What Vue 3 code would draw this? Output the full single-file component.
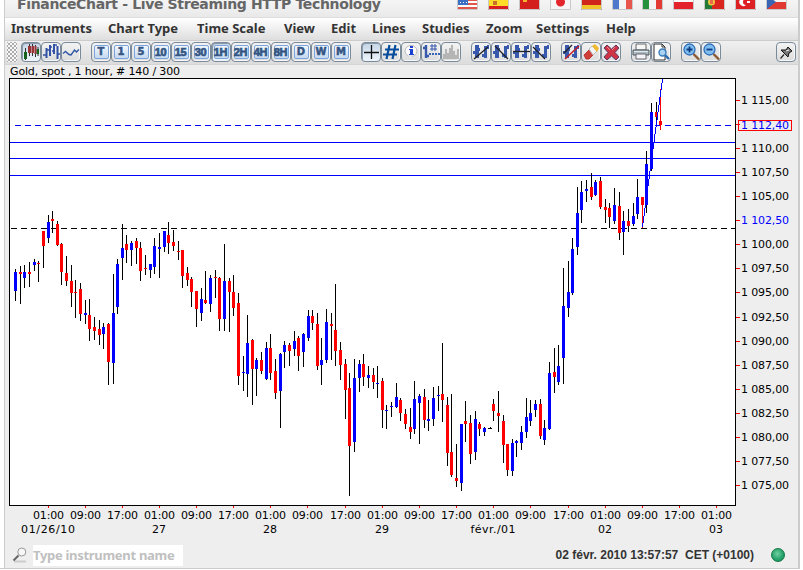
<template>
	<div class="window">
		<header class="title-bar">
			<h1 class="title">FinanceChart - Live Streaming HTTP Technology</h1>
			<div class="flags">
				<svg v-for="flag in flags" :key="flag.name" class="flag" viewBox="0 0 21 16">
					<path v-for="(s, i) in flag.shapes" :key="i" :d="s[0]" :fill="s[1]" />
					<path d="M.5 .5H20.5V15.5H.5Z" fill="none" stroke="#c9c9c9" />
				</svg>
			</div>
		</header>

		<nav class="menu">
			<span v-for="item in menu" :key="item[0]" class="menu-item" :style="{ width: item[1] + 'px' }">{{ item[0] }}</span>
		</nav>

		<div class="toolbar">
			<div class="handle"></div>
			<div v-for="(group, g) in groups" :key="g" class="group" :class="{ 'group-last': g === groups.length - 1 }">
				<button v-for="name in group" :key="name" class="tool" :class="{ active: active.includes(name) }">
					<svg v-if="icons[name]" class="icon" viewBox="0 0 20 20">
						<path
							v-for="(s, i) in icons[name]"
							:key="i"
							:d="s[0]"
							:fill="s[1] || 'none'"
							:stroke="s[2] || 'none'"
							:stroke-width="s[3] || 1"
						/>
					</svg>
					<span v-else class="period" :class="{ narrow: name.length > 1 }">{{ name }}</span>
				</button>
			</div>
		</div>

		<svg class="chart" viewBox="5 65 793 476">
			<text x="10" y="75" textLength="170" class="label">Gold, spot , 1 hour, # 140 / 300</text>
			<rect x="9.5" y="78.5" width="726" height="427" fill="#fff" stroke="#000" />

			<g shape-rendering="crispEdges">
				<path d="M10 142.5H735M10 158.5H735M10 175.5H735" stroke="#00f" />
				<path d="M15 125.5H735" stroke="#00f" stroke-dasharray="6 4" />
				<path d="M11 228.5H735" stroke="#000" stroke-dasharray="6 4" />

				<g v-for="c in candles" :key="c[0]">
					<rect :x="c[0]" :y="c[1]" width="1" :height="c[2] - c[1]" :fill="c[6] || '#000'" />
					<rect :x="c[0] - 1" :y="c[3]" width="3" :height="c[4] - c[3]" :fill="c[5] ? '#00f' : '#f00'" />
				</g>
				<path d="M490 427V429M488 428.5H492" stroke="#000" />
				<path d="M642.5 227L662.5 79" stroke="#00f" fill="none" />

				<path v-for="p in prices" :key="p[0]" :d="`M736 ${p[1]}.5H740`" stroke="#f00" />
				<path v-for="x in ticks" :key="x" :d="`M${x}.5 506V508`" stroke="#f00" />
				<rect x="738.5" y="120.5" width="53" height="10" fill="none" stroke="#f00" />
			</g>

			<text
				v-for="p in prices"
				:key="p[0]"
				x="741"
				:y="p[1] + (p[2] ? 5 : 4)"
				textLength="48"
				class="label"
				:class="{ blue: p[3] }"
			>{{ p[0] }}</text>
			<text v-for="(x, i) in ticks" :key="x" :x="x - 15" y="519" textLength="31" class="label">{{ hours[i % 3] }}</text>
			<text
				v-for="d in days"
				:key="d[0]"
				:x="d[1]"
				y="533"
				text-anchor="middle"
				:textLength="d[2]"
				class="label"
			>{{ d[0] }}</text>
		</svg>

		<footer class="status">
			<svg class="search" viewBox="0 0 16 16">
				<path d="M2 14.5H14" stroke="#ccc" stroke-width="2" />
				<path d="M1.5 13.5L6.5 8.5" stroke="#666" stroke-width="2" />
				<circle cx="9.8" cy="5" r="4" fill="#f7f7f7" stroke="#999" />
			</svg>
			<input class="instrument" placeholder="Type instrument name" />
			<span class="clock">02 févr. 2010 13:57:57&nbsp; CET (+0100)</span>
			<span class="led"></span>
		</footer>
	</div>
</template>

<script setup>
const box = 'M0 0H21V16H0Z';

const flags = [
	{
		name: 'us',
		shapes: [[box, '#fff'], ['M1 1H20V3H1ZM1 5H20V7H1ZM1 9H20V11H1ZM1 13H20V15H1Z', '#e0564a'], ['M1 1H11V11H1Z', '#3b6fc4'], ['M3 8H4V9H3ZM6 8H7V9H6ZM9 8H10V9H9Z', '#fff']],
	},
	{ name: 'es', shapes: [[box, '#d81e1e'], ['M1 5H20V12H1Z', '#ffdc28'], ['M5 7H9V11H5Z', '#c8702a']] },
	{ name: 'cn', shapes: [[box, '#d3201c'], ['M4 5H8V8H4Z', '#f7b52c']] },
	{ name: 'jp', shapes: [[box, '#f6f6f6'], ['M6 8A4.5 4.5 0 1 0 15 8A4.5 4.5 0 1 0 6 8Z', '#e3262b']] },
	{ name: 'de', shapes: [[box, '#333'], ['M1 6H20V11H1Z', '#d0251b'], ['M1 11H20V15H1Z', '#f2c42c']] },
	{ name: 'fr', shapes: [[box, '#f4f4f4'], ['M1 1H7V15H1Z', '#4d78cb'], ['M14 1H20V15H14Z', '#e8554d']] },
	{ name: 'it', shapes: [[box, '#f4f4f4'], ['M1 1H7V15H1Z', '#25913c'], ['M14 1H20V15H14Z', '#e33a34']] },
	{ name: 'pl', shapes: [[box, '#f7f7f7'], ['M1 8H20V15H1Z', '#e3222b']] },
	{ name: 'pt', shapes: [[box, '#d9251e'], ['M1 1H8V15H1Z', '#237a37'], ['M4 8A3.5 3.5 0 1 0 11 8A3.5 3.5 0 1 0 4 8Z', '#f0c43c'], ['M6 6H9V10H6Z', '#e66a4b']] },
	{ name: 'tr', shapes: [[box, '#dc2024'], ['M11 5A4 4 0 1 0 11 11A3 3 0 1 1 11 5ZM12 7H15V9H12Z', '#fff']] },
	{ name: 'cz', shapes: [[box, '#f4f4f4'], ['M1 8H20V15H1Z', '#e13a32'], ['M1 1L10 8L1 15Z', '#3a65b5']] },
];

// caption and slot width
const menu = [
	['Instruments', 97],
	['Chart Type', 89],
	['Time Scale', 87],
	['View', 47],
	['Edit', 41],
	['Lines', 50],
	['Studies', 64],
	['Zoom', 50],
	['Settings', 70],
	['Help', 40],
];

const groups = [
	['candles', 'bars', 'line'],
	['T', '1', '5', '10', '15', '30', '1H', '2H', '4H', '8H', 'D', 'W', 'M'],
	['cross', 'grid', 'info', 'levels', 'volume'],
	['trend', 'ray', 'horizontal', 'parallel'],
	['erase-line', 'eraser', 'delete'],
	['print', 'preview'],
	['zoom-in', 'zoom-out'],
	['pin'],
];

const active = ['candles', '1H', 'cross'];

const barShape = 'M4 3H8V16H4ZM2 9H4V12H2ZM8 6H9V9H8ZM13 4H16V16H13ZM11 12H13V15H11ZM16 3H18V7H16Z';
const lens = 'M3 7.5A5.5 5.5 0 1 0 14 7.5A5.5 5.5 0 1 0 3 7.5Z';

// each entry: path, fill, stroke, stroke width
const icons = {
	candles: [
		['M4.5 6V18M8.5 2V14M11.5 2V14M14.5 3V15M17 5V14', '', '#333'],
		['M3 10H6V17H3ZM15.5 7H18V12H15.5Z', '#16611c'],
		['M7 4H10V11H7ZM10.5 4H13V11H10.5ZM13.5 4H15.5V12H13.5Z', '#993336'],
	],
	bars: [
		['M5.5 6V16M9 3V14M13 2V12M16.5 4V17', '', '#3152a5', 2],
		['M2 13H5M5 8H9M9 5H11M11 9H13M13 3H16M16 12H19', '', '#3152a5', 1.6],
	],
	line: [['M2 11.5L4.5 9.5L8 12.5L10 13L13.5 8L15.5 10L18 7.5', '', '#3058a5', 1.4]],
	cross: [['M10.5 3V17M3 10.5H18', '', '#111', 1.3]],
	grid: [['M8.5 3L5.5 17M14.5 3L11.5 17M4 7.5H18M2 12.5H16', '', '#064e9d', 2.2]],
	info: [
		['M4 9A6 5.5 0 1 0 16 9A6 5.5 0 1 0 4 9Z', '#fafafa', '#bbb'],
		['M7 13L9 17L12 13Z', '#e8e8e8'],
		['M9 4H12V6H9ZM8 7H12V12H13V13H8V12H9V8H8Z', '#1b3fd2'],
	],
	levels: [
		['M5 3V16M2 6H5M5 14H8', '', '#3859ab', 2.4],
		['M9 4H16M9 7H16M11 2V9M14 2V9', '', '#3859ab'],
		['M8 11H10V13H8ZM11 11H13V13H11ZM14 11H16V13H14ZM17 11H19V13H17Z', '#3b66b8'],
	],
	volume: [['M2 17V12H4V7H6V11H8V6H10V3H12V9H14V13H16V7H18V17Z', '#b5b5b5']],
	trend: [[barShape, '#3758ad'], ['M3 17L17 5', '', '#222', 1.3]],
	ray: [[barShape, '#3758ad'], ['M4 4L17 17', '', '#222', 1.3]],
	horizontal: [[barShape, '#3758ad'], ['M2 9.5H19', '', '#222', 1.3]],
	parallel: [[barShape, '#3758ad'], ['M2 5L14 17', '', '#222', 1.3]],
	'erase-line': [[barShape, '#3758ad'], ['M3 11L11 3', '', '#222', 1.2], ['M4 17L18 4', '', '#c3202b', 1.6]],
	eraser: [
		['M3 13L8 8L13 12L8 17H5Z', '#cf3e38', '#b33'],
		['M8 7L11 4L16 9L12 13Z', '#f4f4f4', '#bbb'],
		['M11 4L14 2L18 6L16 10Z', '#f2ba32'],
	],
	delete: [
		['M3 6L6 3L10.5 7L15 3L18 6L14 10.5L18 15L15 18L10.5 14L6 18L3 15L7 10.5Z', '#cf3445', '#5a3968'],
		['M6 5L9 8M14 5L11 8', '', '#ec8a8d', 1],
	],
	print: [
		['M5 2H15V8H5Z', '#f7f7f7', '#666'],
		['M2 8H18V13H2Z', '#aebcc2', '#4d5960'],
		['M3 9H17V10H3Z', '#dfe9ed'],
		['M5 12H15V17H5Z', '#f3f5f6', '#667'],
	],
	preview: [
		['M3 2H11L14 5V18H3Z', '#fff', '#333'],
		['M11 2V5H14', '', '#333'],
		['M13 12L18 17', '', '#2f6bb0', 2.4],
		['M8 10.5A3.5 3.5 0 1 0 15 10.5A3.5 3.5 0 1 0 8 10.5Z', '#a9d2f3', '#3c7dbd', 1.4],
	],
	'zoom-in': [
		['M12.5 12L18 17.5', '', '#8b5a32', 2.4],
		[lens, '#82bdf0', '#2e6fb8', 1.3],
		['M5.5 7.5H11.5M8.5 4.5V10.5', '', '#0c3c82', 1.8],
	],
	'zoom-out': [
		['M12.5 12L18 17.5', '', '#8b5a32', 2.4],
		[lens, '#82bdf0', '#2e6fb8', 1.3],
		['M5.5 7.5H11.5', '', '#0c3c82', 1.8],
	],
	pin: [
		['M4.5 16.5L8 12.5', '', '#222', 1.2],
		['M5 8L10 8L12 5L16 9L13 11L12 15L9 12Z', '#777', '#111'],
		['M10 9L13 8', '', '#eee'],
	],
};

// caption, tick y, boxed, blue
const prices = [
	['1 115,00', 100],
	['1 112,40', 124, true, true],
	['1 110,00', 148],
	['1 107,50', 172],
	['1 105,00', 196],
	['1 102,50', 220, false, true],
	['1 100,00', 244],
	['1 097,50', 268],
	['1 095,00', 292],
	['1 092,50', 317],
	['1 090,00', 341],
	['1 087,50', 365],
	['1 085,00', 389],
	['1 082,50', 413],
	['1 080,00', 437],
	['1 077,50', 461],
	['1 075,00', 485],
];

const hours = ['01:00', '09:00', '17:00'];
const ticks = [48, 85, 122, 159, 196, 233, 270, 307, 345, 382, 419, 456, 493, 530, 568, 605, 642, 679, 716];

// caption, centre, length
const days = [['01/26/10', 48, 54], ['27', 159, 14], ['28', 270, 14], ['29', 382, 14], ['févr./01', 493, 45], ['02', 605, 14], ['03', 716, 14]];

// x, high, low, body top, body bottom, rising, wick colour
const candles = [
	[15, 269, 301, 272, 291, 1], [20, 266, 304, 272, 274, 0], [24, 265, 288, 272, 278, 1], [29, 262, 287, 272, 274, 0],
	[34, 259, 271, 262, 265, 1], [38, 261, 282, 263, 264, 0], [43, 231, 268, 231, 246, 0], [48, 215, 243, 222, 238, 1],
	[52, 211, 233, 219, 221, 0], [57, 221, 246, 224, 245, 0], [61, 243, 285, 244, 272, 0], [66, 256, 286, 273, 281, 0],
	[71, 265, 307, 281, 293, 0], [75, 280, 318, 292, 293, 0], [80, 283, 321, 289, 314, 0], [85, 300, 324, 313, 315, 1],
	[89, 299, 341, 315, 329, 0], [94, 317, 340, 327, 331, 0], [99, 320, 345, 329, 335, 0], [103, 323, 349, 327, 334, 1],
	[108, 323, 385, 324, 362, 0], [113, 274, 384, 313, 363, 1], [117, 259, 314, 264, 307, 1], [122, 224, 280, 248, 258, 1],
	[126, 235, 263, 244, 250, 0], [131, 241, 266, 243, 250, 1], [136, 238, 264, 241, 248, 0], [140, 242, 281, 248, 271, 0],
	[145, 255, 275, 268, 269, 0], [150, 264, 278, 264, 270, 1], [154, 238, 274, 246, 267, 1], [159, 233, 278, 247, 249, 1],
	[164, 231, 252, 231, 247, 1], [168, 222, 254, 235, 243, 0], [173, 230, 251, 242, 246, 0], [178, 241, 260, 251, 252, 0],
	[182, 250, 288, 250, 276, 0], [187, 267, 286, 273, 280, 0], [191, 277, 307, 279, 292, 0], [196, 291, 327, 291, 309, 0],
	[201, 288, 321, 299, 313, 1], [205, 271, 304, 300, 303, 0], [210, 275, 312, 278, 304, 1], [215, 270, 298, 277, 278, 0],
	[219, 277, 331, 278, 319, 0], [224, 244, 331, 281, 319, 1], [229, 278, 332, 281, 292, 0], [233, 275, 316, 292, 308, 0],
	[238, 293, 385, 303, 376, 0], [243, 356, 391, 372, 373, 1], [247, 315, 397, 343, 374, 1], [252, 339, 405, 340, 369, 0],
	[256, 358, 396, 360, 369, 1], [261, 352, 374, 360, 371, 0], [266, 342, 380, 348, 379, 1], [270, 334, 380, 348, 373, 0],
	[275, 359, 399, 371, 393, 0], [280, 353, 428, 354, 391, 1], [284, 341, 368, 345, 352, 1], [289, 343, 366, 345, 351, 0],
	[294, 331, 356, 341, 349, 1], [298, 336, 371, 338, 356, 0], [303, 333, 367, 334, 352, 1], [308, 310, 341, 316, 338, 1],
	[312, 310, 330, 316, 323, 0], [317, 313, 370, 324, 366, 0], [321, 338, 385, 360, 365, 1], [326, 309, 363, 322, 360, 1],
	[331, 313, 360, 324, 326, 0], [335, 284, 366, 330, 351, 0], [340, 342, 380, 350, 365, 0], [345, 359, 419, 364, 390, 0],
	[349, 373, 496, 388, 446, 0], [354, 359, 452, 378, 442, 1], [359, 360, 392, 364, 378, 1], [363, 354, 386, 364, 377, 0],
	[368, 366, 388, 375, 378, 1], [373, 368, 389, 375, 382, 0], [377, 366, 398, 383, 384, 1], [382, 378, 428, 381, 410, 0],
	[386, 405, 429, 410, 411, 1], [391, 402, 417, 406, 407, 1], [396, 383, 408, 397, 407, 1], [400, 398, 421, 400, 413, 0],
	[405, 409, 429, 414, 424, 0], [410, 408, 439, 427, 432, 0], [414, 381, 434, 399, 429, 1], [419, 394, 444, 396, 403, 1],
	[424, 389, 428, 397, 420, 0], [428, 400, 431, 419, 421, 1], [433, 387, 426, 398, 419, 1], [438, 386, 411, 395, 396, 1],
	[442, 343, 422, 394, 400, 0], [447, 397, 466, 405, 453, 0], [451, 394, 477, 452, 475, 0], [456, 444, 487, 478, 481, 0],
	[461, 424, 491, 424, 483, 1], [465, 401, 442, 421, 424, 0], [470, 415, 464, 423, 454, 0], [475, 411, 460, 419, 452, 1],
	[479, 422, 436, 424, 429, 0], [484, 427, 436, 428, 432, 1], [493, 399, 421, 404, 411, 0], [498, 391, 432, 413, 416, 0],
	[503, 415, 463, 421, 445, 0], [507, 444, 476, 444, 470, 0], [512, 439, 476, 443, 471, 1], [516, 440, 457, 441, 443, 1],
	[521, 426, 450, 432, 443, 1], [526, 398, 438, 417, 432, 1], [530, 400, 426, 413, 421, 1], [535, 400, 417, 404, 410, 1],
	[540, 399, 439, 404, 436, 0], [544, 420, 445, 428, 440, 1], [549, 362, 430, 373, 429, 1], [554, 348, 393, 372, 377, 0],
	[558, 345, 385, 366, 382, 1], [563, 268, 384, 306, 358, 1], [568, 261, 317, 292, 308, 1], [572, 238, 295, 249, 293, 1],
	[577, 187, 255, 213, 247, 1], [581, 181, 223, 192, 210, 1], [586, 180, 202, 189, 191, 1], [591, 173, 200, 187, 197, 0],
	[595, 180, 196, 182, 195, 1], [600, 177, 209, 181, 207, 0], [605, 199, 223, 207, 210, 0], [609, 203, 228, 208, 217, 0],
	[614, 188, 224, 205, 221, 1], [619, 192, 240, 206, 233, 0], [623, 211, 255, 221, 232, 1], [628, 209, 232, 221, 226, 0],
	[633, 203, 226, 216, 224, 1], [637, 179, 219, 197, 214, 1], [642, 197, 228, 197, 205, 0, '#f00'], [646, 151, 213, 164, 205, 1],
	[651, 103, 171, 112, 169, 1], [656, 102, 120, 112, 117, 0], [660, 89, 130, 121, 125, 0, '#f00'],
];
</script>

<style>
body {
	margin: 0;
	background: #fff;
}
</style>

<style scoped>
.window {
	box-sizing: border-box;
	width: 800px;
	height: 569px;
	padding-left: 4px;
	border-right: 2px solid #ccc;
	border-bottom: 1px solid #ccc;
	display: flex;
	flex-direction: column;
	background: linear-gradient(90deg, #fff 4px, #ccc 4px, #ccc 5px, #eee 5px);
}

.window > * {
	box-sizing: border-box;
	margin-left: 1px;
	flex: none;
}

.title-bar {
	display: flex;
	justify-content: space-between;
	height: 17px;
	padding: 0 11px 0 12px;
	background: linear-gradient(#f5f5f5, #e9e9e9);
}

.title {
	margin: -6px 0 0;
	font: bold 14px/20px "DejaVu Sans", sans-serif;
	letter-spacing: -0.35px;
	white-space: nowrap;
	color: #666;
}

.flags {
	display: flex;
	gap: 9.9px;
	margin-top: -6px;
}

.flag {
	width: 21px;
	height: 16px;
}

.menu {
	display: flex;
	height: 23px;
	padding-left: 6px;
	border-top: 1px solid #ddd;
	background: linear-gradient(#fff, #dedede);
	font: bold 13px/20px "Noto Sans", sans-serif;
	color: #333;
}

.menu-item {
	white-space: nowrap;
}

.toolbar {
	display: flex;
	gap: 10px;
	height: 25px;
	padding: 1px 2px 0;
	border-top: 1px solid #ccc;
	border-bottom: 1px solid #d5d5d5;
	background: linear-gradient(#f0f0f0, #dcdcdc);
}

.handle {
	width: 10px;
	height: 20px;
	margin-right: -6px;
	background: radial-gradient(circle, #aaa 0.7px, transparent 1px) 0 0 / 4px 4px, radial-gradient(circle, #aaa 0.7px, transparent 1px) 2px 2px / 4px 4px, #f8f8f8;
}

.group {
	display: flex;
}

.group-last {
	margin-left: auto;
}

.tool {
	box-sizing: border-box;
	display: flex;
	align-items: center;
	justify-content: center;
	width: 20px;
	height: 20px;
	padding: 0;
	border: 1px solid #7a8a99;
	border-radius: 4px;
	background: linear-gradient(#f3f3f3, #dcdcdc);
	box-shadow: inset -1px -1px #f8f8f8;
}

.tool.active {
	background: linear-gradient(#c5d5e6, #eef4fb);
	box-shadow: inset 1px 1px #8b9aaa;
}

.icon {
	width: 20px;
	height: 20px;
	flex: none;
}

.period {
	box-sizing: border-box;
	width: 15px;
	height: 14px;
	border: 1px solid #7ba5dc;
	border-radius: 2px;
	background: linear-gradient(#f1f6fc, #c5d9f0);
	font: bold 10px/12px "DejaVu Sans", sans-serif;
	text-align: center;
	color: #345583;
	-webkit-text-stroke: 0.5px #345583;
}

.period.narrow {
	font-family: "Liberation Sans", sans-serif;
	font-size: 11px;
	letter-spacing: -0.4px;
	text-indent: -1px;
	-webkit-text-stroke-width: 0.7px;
}

.chart {
	display: block;
	width: 793px;
	height: 476px;
}

.label {
	font: 11px "DejaVu Sans", sans-serif;
	fill: #000;
}

.label.blue {
	fill: #00f;
}

.status {
	display: flex;
	align-items: center;
	height: 27px;
	padding: 1px 13px 0 7px;
}

.search {
	width: 16px;
	height: 16px;
	margin-right: 5px;
}

.instrument {
	box-sizing: border-box;
	width: 150px;
	height: 21px;
	padding: 0;
	border: 0;
	background: #fff;
	font: bold 13px "Noto Sans", sans-serif;
	letter-spacing: -0.3px;
}

.instrument::placeholder {
	color: #c0c0c0;
	opacity: 1;
}

.clock {
	margin-left: auto;
	font: bold 12px "Liberation Sans", sans-serif;
	color: #333;
}

.led {
	box-sizing: border-box;
	width: 14px;
	height: 14px;
	margin-left: 17px;
	border: 1px solid #117a45;
	border-radius: 50%;
	background: radial-gradient(circle at 45% 40%, #6fd0a0, #1f9c64 65%);
}
</style>
